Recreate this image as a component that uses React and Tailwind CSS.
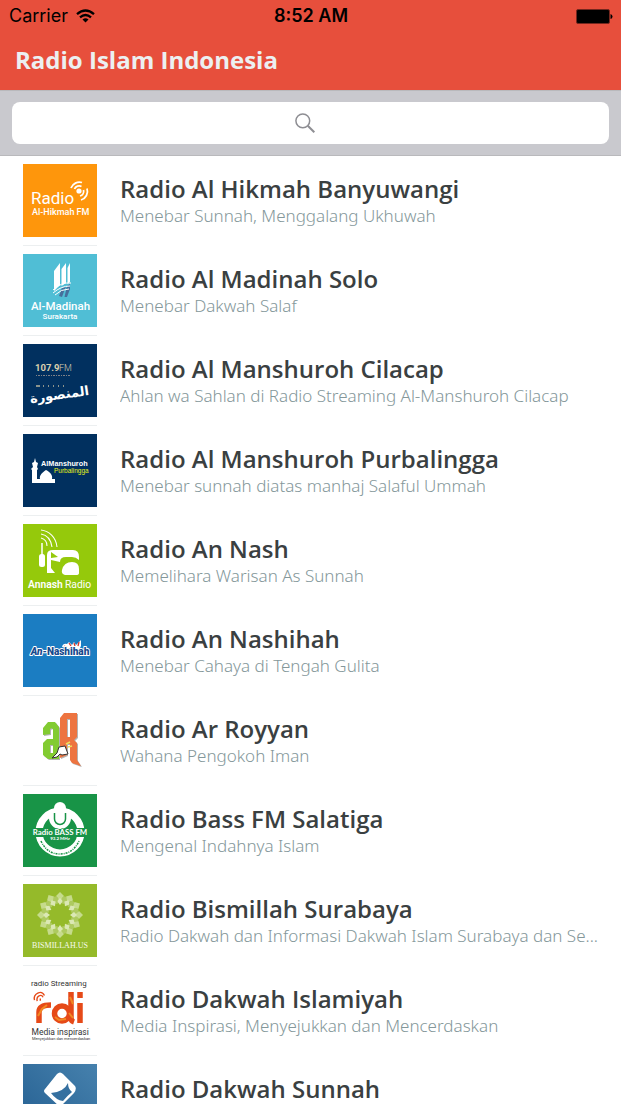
import React from "react";

function LogoFrame({ className, children }) {
  return (
    <svg viewBox="0 0 74 73" aria-hidden="true" className={"block h-[73px] w-[74px] " + className}>
      {children}
    </svg>
  );
}

const roboto = "Roboto, sans-serif";

function HikmahLogo() {
  return (
    <LogoFrame className="bg-[#fe960c]">
      <g fill="#fff" fontFamily={roboto}>
        <text x="8" y="40" fontSize="17">Radio</text>
        <text x="9" y="51" fontSize="9" fontWeight="500">Al-Hikmah FM</text>
      </g>
      <g fill="none" stroke="#fff" strokeWidth="1.8">
        <circle cx="56" cy="27" r="2.600" fill="#fff" stroke="none" />
        <path d="M51.500 25a5 5 0 0 1 7-2.500M48 24a9 9 0 0 1 11-5.500M60.500 26a5 5 0 0 1-3.500 6M64 24.500a9 9 0 0 1-6 11.500" />
      </g>
    </LogoFrame>
  );
}

function MadinahLogo() {
  return (
    <LogoFrame className="bg-[#50bed5]">
      <g fill="#fff">
        <path d="M31 17l6-8v22l-6 6zM38.500 15l4.500-6v20l-4.500 3zM44.500 14l2.500-5v19l-2.500 2z" />
        <path d="M36 42l3-8 4-2-4 11zM41.500 43l2.500-11 3-2v5l-3 8z" fill="#466f9c" />
        <path d="M30 36q8-8 18-7M30 39q8-7 17-7M32 41q6-6 14-6" fill="none" stroke="#fff" strokeWidth="1" />
      </g>
      <g fill="#fff" fontFamily={roboto} textAnchor="middle">
        <text x="37.500" y="56" fontSize="11.500" fontWeight="500">Al-Madinah</text>
        <text x="37" y="65" fontSize="8" fontWeight="500">Surakarta</text>
      </g>
    </LogoFrame>
  );
}

function CilacapLogo() {
  return (
    <LogoFrame className="bg-[#01305f]">
      <g fill="#d9cfae" fontFamily={roboto}>
        <text x="12" y="27" fontSize="9.500" fontWeight="700">107.9</text>
        <text x="36" y="27" fontSize="9" fontWeight="300">FM</text>
      </g>
      <path d="M13 31.500h35" stroke="#7f8187" strokeWidth="1" strokeDasharray="1 1 2 1" />
      <path d="M13 42h4m3 0h1m4 0h1m4 0h1m4 0h1m4 0h1" stroke="#b9b49c" strokeWidth="1.500" />
      <text x="37" y="55" fontSize="13" fontWeight="700" textAnchor="middle" fill="#fff" fontFamily="'DejaVu Sans', sans-serif" transform="rotate(-8 37 55)">المنصورة</text>
    </LogoFrame>
  );
}

function PurbalinggaLogo() {
  return (
    <LogoFrame className="bg-[#01305f]">
      <g fill="#fff">
        <path d="M9 49V36l-1-1 2-2-1-4 2-1 1-4 1 4 2 1-1 4 1 2-1 1v9h3c-1-4 3-7 6-9 4 2 7 5 6 9h3v4z" />
        <text x="18" y="32" fontSize="7.300" fontWeight="700" fontFamily="'Liberation Sans', sans-serif">AlManshuroh</text>
      </g>
      <text x="31" y="39" fontSize="6.500" fill="#e8f217" fontFamily="'Liberation Sans', sans-serif">Purbalingga</text>
    </LogoFrame>
  );
}

function AnnashLogo() {
  return (
    <LogoFrame className="bg-[#95c90b]">
      <g fill="none" stroke="#fff">
        <path d="M18 6c8 1 15 7 16 17M18 10c6 1 10 6 11 13M18 14c4 1 6 4 6 8" strokeWidth="1.100" />
        <path d="M19 19v14" strokeWidth="1.500" />
      </g>
      <rect x="16" y="30" width="6" height="13" rx="2.500" fill="#fff" />
      <path d="M24 49V31q0-5 6-5h20q6 0 6 7v3q-3-3-7-3h-6q-6 0-6 5l-9-2v8l4 5zM39 46q2-8 10-8 7 0 7 7v4q0 2-3 2H42q-4-1-3-5z" fill="#fff" />
      <path d="M28 28v6l7-1z" fill="#95c90b" />
      <g fill="#fff" fontFamily={roboto} fontSize="10.300">
        <text x="5" y="64" fontWeight="600">Annash</text>
        <text x="42" y="64">Radio</text>
      </g>
    </LogoFrame>
  );
}

function NashihahLogo() {
  return (
    <LogoFrame className="bg-[#1b7dc2]">
      <path d="M39 33q1-4 5-3l2-2 3 3 2-3 2 3 5-5v6l-2 4z" fill="#fff" />
      <path d="M41 32l3 1m2-4l2 3m3-3l1 3m4-4l-1 4" stroke="#d5382c" strokeWidth="1.300" />
      <text x="37" y="41" textAnchor="middle" fill="#164a8d" stroke="#fff" strokeWidth="1.800" paintOrder="stroke" strokeLinejoin="round" fontFamily="Roboto, sans-serif" fontSize="10" fontWeight="900">
        <tspan fontStyle="italic">An-</tspan>Nashihah
      </text>
    </LogoFrame>
  );
}

const royyanA = "M20 24l5-6h7l4 5v32H25l-5-4V39l4-4h6V25q-3-2-3 1v4l-7 1zM27 41v8h3v-8z";
const royyanR = "M37 14l4-5h13v24l-3 3 3 3v17l4 6-9-3-2-3V40h-3v11l-7 3V15zM44 15v18h3V15z";

function RoyyanLogo() {
  return (
    <LogoFrame className="bg-white">
      <g transform="translate(1 1)" fill="#8b8b8b" opacity=".65" fillRule="evenodd">
        <path d={royyanA} />
        <path d={royyanR} />
      </g>
      <path fillRule="evenodd" d={royyanA} fill="#82cb32" />
      <path fillRule="evenodd" d={royyanR} fill="#ed7440" />
      <path d="M29 54l5-5 2-6 6-1 3 8-6 1-2-1-3 3z" fill="#fff" stroke="#333" strokeWidth="1" />
      <path d="M43 40l4-2m-2 5l4-1" stroke="#f0df5c" strokeWidth="1.500" />
    </LogoFrame>
  );
}

function BassLogo() {
  return (
    <LogoFrame className="bg-[#189447]">
      <circle cx="37" cy="38" r="21" fill="none" stroke="#fff" strokeWidth="7" />
      <path d="M8 34h58v9H8z" fill="#189447" />
      <circle cx="37" cy="24" r="11" fill="#fff" />
      <circle cx="37" cy="14" r="6" fill="#fff" />
      <path d="M31.500 19v6a5.500 5.500 0 0 0 11 0v-6" fill="none" stroke="#189447" strokeWidth="1.500" />
      <path d="M18 47q6 13 19 13t19-13" fill="none" stroke="#189447" strokeWidth="1.500" strokeDasharray="2 1 1 1" />
      <g fill="#fff" textAnchor="middle" fontFamily="Lato, sans-serif" fontWeight="700" stroke="#189447" strokeWidth="1" paintOrder="stroke">
        <text x="37" y="41" fontSize="7.800">Radio BASS FM</text>
        <text x="37" y="46" fontSize="4.500">93.2 MHz</text>
      </g>
    </LogoFrame>
  );
}

const petals = Array.from({ length: 12 }, (_, i) => i * 30);

function BismillahLogo() {
  return (
    <LogoFrame className="bg-[#95ba2a]">
      {petals.map((angle) => (
        <g key={angle} transform={`rotate(${angle} 37 31)`}>
          <path d="M37 8l4 4-4 5-4-5z" fill="#c6db8c" />
          <path d="M41 12l3 3-4 5-3-3zM33 12l-3 3 4 5 3-3z" fill="#aeca60" />
          <path d="M37 14l3 3-3 4-3-4z" fill="#dbe8b4" />
        </g>
      ))}
      <text x="37" y="64" textAnchor="middle" fill="#f7faec" fontSize="8" fontFamily="'Liberation Serif', serif">BISMILLAH.US</text>
    </LogoFrame>
  );
}

function RdiLogo() {
  return (
    <LogoFrame className="bg-white">
      <g fill="#333" fontFamily={roboto}>
        <text x="8" y="12" fontSize="7.900">radio Streaming</text>
        <text x="8.500" y="60.500" fontSize="8.500">Media inspirasi</text>
        <text x="9" y="66" fontSize="4">Menyejukkan dan mencerdaskan</text>
      </g>
      <g fill="none" stroke="#e64a18" strokeWidth="5.500">
        <path d="M16 49V38q0-7 12-7" />
        <circle cx="39" cy="39.500" r="7.500" />
        <path d="M48 18v26q0 3 3 4" />
        <path d="M57 29v20M57 18v6" />
      </g>
      <path d="M15 42l4-7 5-4M32 43l4 3 7-1M47 23l3 7m-4 9l4 5" fill="none" stroke="#f18a22" strokeWidth="2" />
      <path d="M11 24q1-5 6-5t5 5M13 26q1-4 4-4t3 3M16 27l1-2" fill="none" stroke="#e64a18" strokeWidth="1.400" transform="rotate(-25 16 24)" />
    </LogoFrame>
  );
}

function SunnahLogo() {
  return (
    <LogoFrame className="bg-linear-to-tr from-[#245f91] to-[#4681ad]">
      <path d="M22 25L34 10q3-3 6 0l12 12q2 3-1 7L37 43 22 29q-2-2 0-4z" fill="#fff" />
      <path d="M28 29q13-1 17-10 0 6 4 9-5 4-9 9-7-1-12-8z" fill="#3570a0" />
    </LogoFrame>
  );
}

const stations = [
  { name: "Radio Al Hikmah Banyuwangi", tagline: "Menebar Sunnah, Menggalang Ukhuwah", Logo: HikmahLogo },
  { name: "Radio Al Madinah Solo", tagline: "Menebar Dakwah Salaf", Logo: MadinahLogo },
  { name: "Radio Al Manshuroh Cilacap", tagline: "Ahlan wa Sahlan di Radio Streaming Al-Manshuroh Cilacap", Logo: CilacapLogo },
  { name: "Radio Al Manshuroh Purbalingga", tagline: "Menebar sunnah diatas manhaj Salaful Ummah", Logo: PurbalinggaLogo },
  { name: "Radio An Nash", tagline: "Memelihara Warisan As Sunnah", Logo: AnnashLogo },
  { name: "Radio An Nashihah", tagline: "Menebar Cahaya di Tengah Gulita", Logo: NashihahLogo },
  { name: "Radio Ar Royyan", tagline: "Wahana Pengokoh Iman", Logo: RoyyanLogo },
  { name: "Radio Bass FM Salatiga", tagline: "Mengenal Indahnya Islam", Logo: BassLogo },
  { name: "Radio Bismillah Surabaya", tagline: "Radio Dakwah dan Informasi Dakwah Islam Surabaya dan Se...", Logo: BismillahLogo },
  { name: "Radio Dakwah Islamiyah", tagline: "Media Inspirasi, Menyejukkan dan Mencerdaskan", Logo: RdiLogo },
  { name: "Radio Dakwah Sunnah", tagline: "", Logo: SunnahLogo },
];

function StatusBar() {
  return (
    <div className="grid h-8 grid-cols-3 items-center pr-2 pl-[9px] font-[Inter,sans-serif] text-lg leading-8 text-black">
      <div className="flex items-center gap-2">
        <span>Carrier</span>
        <svg viewBox="0 0 19 14" className="h-[14px] w-[19px]" fill="none" stroke="#000" strokeWidth="2.300" aria-hidden="true">
          <path d="M1 5.200q8.500-7.400 17 0M4 8.400q5.500-4.800 11 0" />
          <path d="M6.500 10.500q3-2.500 6 0l-3 3z" fill="#000" stroke="none" />
        </svg>
      </div>
      <span className="text-center font-semibold">8:52 AM</span>
      <svg viewBox="0 0 37 15" className="h-[15px] w-[37px] justify-self-end" aria-hidden="true">
        <rect x=".5" y=".5" width="33" height="14" rx="1.500" fill="#000" stroke="#74271e" />
        <path d="M34.500 5q2 .5 2 2.500t-2 2.500z" fill="#000" />
      </svg>
    </div>
  );
}

function SearchBar() {
  return (
    <div className="border-y border-[#b9b9bc] bg-[#c9c9ce] px-3 py-[11px]">
      <div className="relative">
        <input type="search" aria-label="Search" className="block h-[42px] w-full rounded-lg bg-white px-10 text-center outline-none" />
        <svg viewBox="0 0 20 20" className="pointer-events-none absolute top-[11px] left-1/2 -ml-4 size-5" fill="none" stroke="#8e8e93" strokeWidth="1.500" aria-hidden="true">
          <circle cx="7.800" cy="7.800" r="6.900" />
          <path d="M12.800 12.800l6.500 6.500" strokeWidth="2" />
        </svg>
      </div>
    </div>
  );
}

function StationRow({ name, tagline, Logo }) {
  return (
    <li>
      <a href="#station" className="flex gap-[23px] pr-5 pl-[23px]">
        <div className="shrink-0 border-b border-[#eceff0] py-2">
          <Logo />
        </div>
        <div className="min-w-0 flex-1 pt-[18px]">
          <h2 className="text-2xl leading-[30px] font-semibold text-[#3a4041]">{name}</h2>
          <p className="truncate font-['Noto_Sans',sans-serif] text-[17px] leading-6 font-light text-[#84979a]">{tagline}</p>
        </div>
      </a>
    </li>
  );
}

export default function App() {
  return (
    <div className="h-screen overflow-hidden bg-white font-['Open_Sans','Noto_Sans',sans-serif]">
      <header className="bg-[#e74f3c]">
        <StatusBar />
        <h1 className="px-[15px] pt-3 pb-[14px] text-2xl leading-8 font-bold text-[#ecf0f1]">Radio Islam Indonesia</h1>
      </header>
      <SearchBar />
      <ul>
        {stations.map((station) => (
          <StationRow key={station.name} {...station} />
        ))}
      </ul>
    </div>
  );
}
